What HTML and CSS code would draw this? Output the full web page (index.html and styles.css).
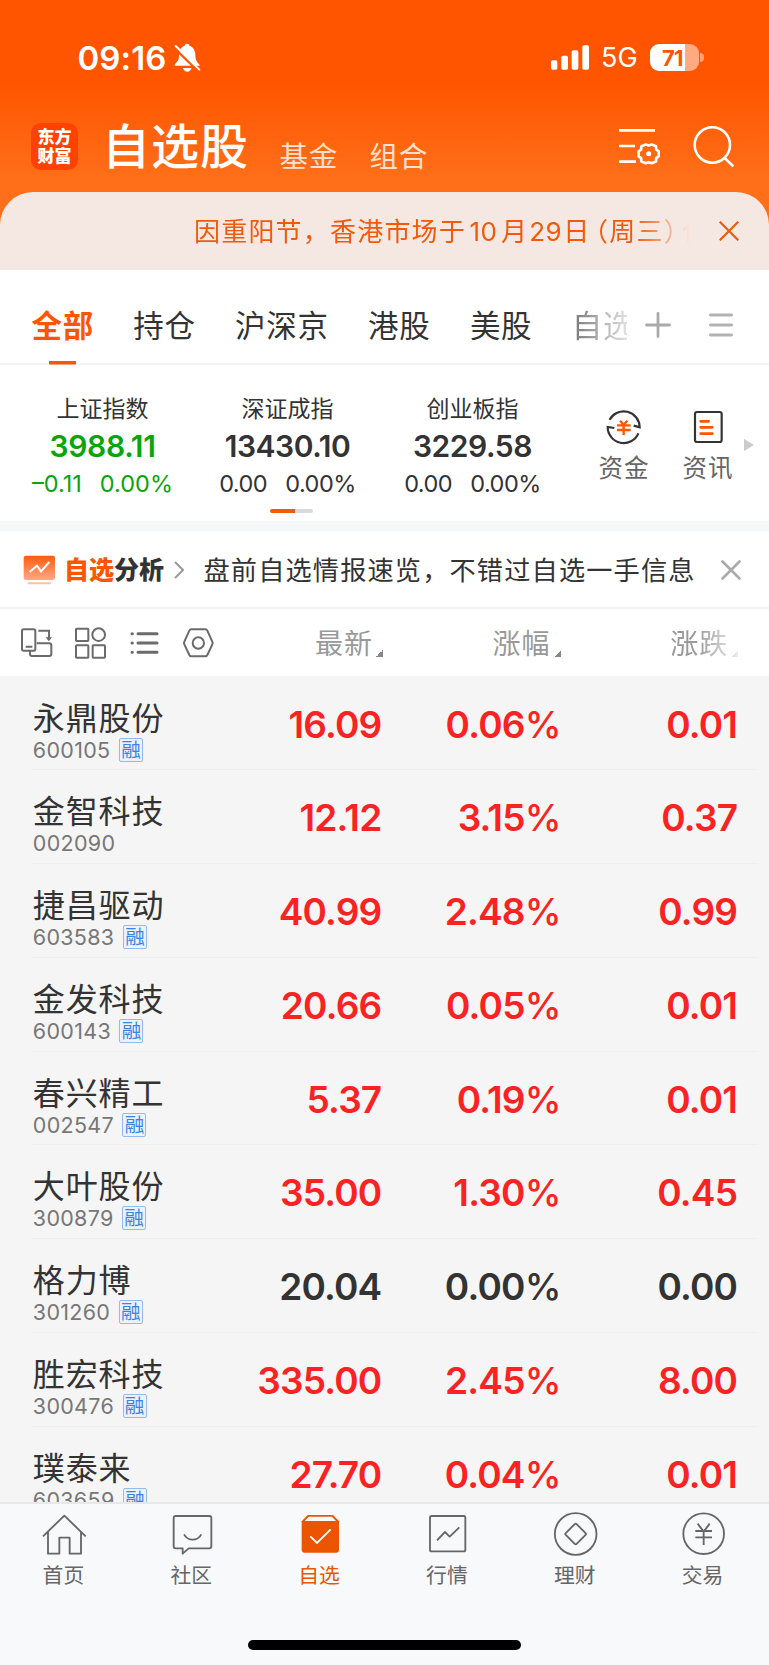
FILE: index.html
```html
<!DOCTYPE html>
<html lang="zh-CN">
<head>
<meta charset="utf-8">
<title>自选股</title>
<link rel="stylesheet" href="styles.css">
</head>
<body>
<div class="app">
  <header class="top">
    <div class="status">
      <span class="time">09:16</span>
      <svg class="bell" viewBox="516 63 90 99"><path fill="#fff" d="M524 137q0-4 3-7c9-8 10-15 10-25 0-16 7-25 17-28 0-4 3-6 7-6s7 2 7 6c11 3 18 13 18 28 0 12 3 19 10 26q3 3 3 6zM548 144h27q-4 11-13 11t-14-11z"/><path stroke="#ff5500" stroke-width="7" d="M524 85l76 74"/><path stroke="#fff" stroke-width="6" stroke-linecap="round" d="M527 78l71 71"/></svg>
      <svg class="signal" viewBox="498 74 114 75" fill="#fff"><rect x="498" y="120" width="19" height="28" rx="5"/><rect x="529" y="106" width="20" height="42" rx="5"/><rect x="560" y="90" width="20" height="58" rx="5"/><rect x="592" y="75" width="20" height="73" rx="5"/></svg>
      <span class="net">5G</span>
      <span class="battery"><span class="level">71</span></span>
      <span class="nub"></span>
    </div>
    <div class="titlebar">
      <div class="logo">东方<br>财富</div>
      <h1 class="title">自选股</h1>
      <span class="sub">基金</span>
      <span class="sub">组合</span>
      <svg class="filter" viewBox="699 320 132 120" fill="none" stroke="#fff" stroke-width="8"><path d="M702 333h108M702 380h48M702 427h51"/><polygon transform="translate(791 403.500)" stroke-linejoin="round" points="30,-7.500 30,7.500 22.500,13 22,23.100 9,28 0,25 -9,28 -22,23.100 -22.500,13 -30,7.500 -30,-7.500 -22.500,-13 -22,-23.100 -9,-28 0,-25 9,-28 22,-23.100 22.500,-13"/><circle cx="791" cy="403.500" r="7.500" fill="#fff" stroke="none"/></svg>
      <svg class="search" viewBox="921 314 132 132" fill="none" stroke="#fff" stroke-width="7.500"><circle cx="982" cy="374" r="53"/><path d="M1019 413l26 25"/></svg>
    </div>
    <div class="notice">
      <div class="notice-text">因重阳节，香港市场于<span class="num">10</span>月<span class="num">29</span>日<span class="po">（</span>周三<span class="pc">）</span>休市</div>
      <svg class="close" viewBox="0 0 20 20"><path stroke="#f05a0a" stroke-width="2.200" d="M.700.700l18.600 18.600M19.300.700L.700 19.300"/></svg>
    </div>
  </header>

  <nav class="groups">
    <div class="group-list">
      <span class="group on">全部</span><span class="group">持仓</span><span class="group">沪深京</span><span class="group">港股</span><span class="group">美股</span><span class="group">自选</span>
    </div>
    <svg class="plus" viewBox="0 0 26 26"><path stroke="#aaa" stroke-width="2.800" stroke-linecap="round" d="M1.500 13h23M13 1.500v23"/></svg>
    <svg class="menu" viewBox="0 0 24 26"><path stroke="#b2b2b2" stroke-width="2.800" stroke-linecap="round" d="M1.400 3h21.200M1.400 13h21.200M1.400 23h21.200"/></svg>
  </nav>

  <section class="indices">
    <div class="index down"><div class="iname">上证指数</div><div class="iprice">3988.11</div><div class="ichg"><span>–0.11</span><span>0.00%</span></div></div>
    <div class="index"><div class="iname">深证成指</div><div class="iprice">13430.10</div><div class="ichg"><span>0.00</span><span>0.00%</span></div><div class="pager"></div></div>
    <div class="index"><div class="iname">创业板指</div><div class="iprice">3229.58</div><div class="ichg"><span>0.00</span><span>0.00%</span></div></div>
    <div class="tool tool-fund">
      <svg viewBox="664 117 108 108" fill="none" stroke="#333" stroke-width="6.500"><path d="M674.600 149.500A48 48 0 0 1 765 172l-18-5M761.200 190A48 48 0 0 1 669 171l20 3"/><path stroke="#ff5500" stroke-width="7" d="M706 152l11 12 11-12M697 166h41M697 180h41M717 164v31"/></svg>
      <span>资金</span>
    </div>
    <div class="tool">
      <svg viewBox="915 117 108 108" fill="none" stroke="#333" stroke-width="6.500"><rect x="930" y="126" width="80" height="90" rx="6"/><path stroke="#ff5500" stroke-width="8" stroke-linecap="round" d="M947 154h24M947 172h35M947 191h35"/></svg>
      <span>资讯</span>
    </div>
    <svg class="more" viewBox="0 0 10 12"><path fill="#ccc" d="M0 0l10 6-10 6z"/></svg>
  </section>

  <section class="analysis">
    <svg class="chart-badge" viewBox="69 76 96 90"><defs><linearGradient id="g" x1="0" y1="0" x2="0" y2="1"><stop offset="0" stop-color="#ff5a0c"/><stop offset="1" stop-color="#ffa987"/></linearGradient></defs><rect x="71" y="78" width="94" height="73" rx="7" fill="url(#g)"/><path fill="none" stroke="#fff" stroke-width="6" d="M89 127l22-19 12 17 25-28"/><path stroke="#ffc0a6" stroke-width="6" stroke-linecap="round" d="M86 161h64"/></svg>
    <span class="brand"><b>自选</b>分析</span>
    <svg class="chev" viewBox="0 0 10 18"><path fill="none" stroke="#999" stroke-width="2" d="M1 1l8 8-8 8"/></svg>
    <span class="brief">盘前自选情报速览，不错过自选一手信息</span>
    <svg class="close" viewBox="0 0 20 20"><path stroke="#aaa" stroke-width="2.600" stroke-linecap="round" d="M1.500 1.500l17 17M18.500 1.500l-17 17"/></svg>
  </section>

  <div class="cols">
    <svg class="views" viewBox="60 288 585 102" fill="none" stroke="#6b6b6b" stroke-width="6">
      <rect x="66" y="298" width="40" height="64" rx="5"/><path d="M77 350h20M115 302h32v28M110 340h38q6 0 6 6v26q0 6-6 6H96q-6 0-6-6v-9"/><path fill="#6b6b6b" stroke="none" d="M137 322h19l-9.500 12z"/>
      <rect x="228" y="296" width="37" height="37" rx="2"/><circle cx="296" cy="314" r="19"/><rect x="228" y="346" width="37" height="37" rx="2"/><rect x="278" y="346" width="37" height="37" rx="2"/>
      <path stroke-width="9" stroke-linecap="round" d="M414 311h57M414 339h57M414 367h57M396 311h1M396 339h1M396 367h1"/>
      <path stroke-linejoin="round" d="M574 298h42q4 0 6 4l15 33q2 4 0 8l-15 32q-2 4-6 4h-42q-4 0-6-4l-15-32q-2-4 0-8l15-33q2-4 6-4z"/><circle cx="595" cy="339" r="17"/>
    </svg>
    <span class="col c1">最新<i></i></span>
    <span class="col c2">涨幅<i></i></span>
    <span class="col c3">涨跌<i></i></span>
  </div>

  <main class="stocks">
    <div class="row"><div class="who"><div class="name">永鼎股份</div><div class="code">600105<em>融</em></div></div><span class="v v1">16.09</span><span class="v v2">0.06<s>%</s></span><span class="v v3">0.01</span></div>
    <div class="row"><div class="who"><div class="name">金智科技</div><div class="code">002090</div></div><span class="v v1">12.12</span><span class="v v2">3.15<s>%</s></span><span class="v v3">0.37</span></div>
    <div class="row"><div class="who"><div class="name">捷昌驱动</div><div class="code">603583<em>融</em></div></div><span class="v v1">40.99</span><span class="v v2">2.48<s>%</s></span><span class="v v3">0.99</span></div>
    <div class="row"><div class="who"><div class="name">金发科技</div><div class="code">600143<em>融</em></div></div><span class="v v1">20.66</span><span class="v v2">0.05<s>%</s></span><span class="v v3">0.01</span></div>
    <div class="row"><div class="who"><div class="name">春兴精工</div><div class="code">002547<em>融</em></div></div><span class="v v1">5.37</span><span class="v v2">0.19<s>%</s></span><span class="v v3">0.01</span></div>
    <div class="row"><div class="who"><div class="name">大叶股份</div><div class="code">300879<em>融</em></div></div><span class="v v1">35.00</span><span class="v v2">1.30<s>%</s></span><span class="v v3">0.45</span></div>
    <div class="row flat"><div class="who"><div class="name">格力博</div><div class="code">301260<em>融</em></div></div><span class="v v1">20.04</span><span class="v v2">0.00<s>%</s></span><span class="v v3">0.00</span></div>
    <div class="row"><div class="who"><div class="name">胜宏科技</div><div class="code">300476<em>融</em></div></div><span class="v v1">335.00</span><span class="v v2">2.45<s>%</s></span><span class="v v3">8.00</span></div>
    <div class="row"><div class="who"><div class="name">璞泰来</div><div class="code">603659<em>融</em></div></div><span class="v v1">27.70</span><span class="v v2">0.04<s>%</s></span><span class="v v3">0.01</span></div>
  </main>

  <footer class="tabbar">
    <div class="tabs">
      <div class="tab"><svg viewBox="120 210 144 144"><path d="M129 289l64-62 64 62M144 276v65h34v-48h31v48h34v-65"/></svg><span>首页</span></div>
      <div class="tab"><svg viewBox="503 210 144 144"><path d="M526 228h101q6 0 6 6v85q0 6-6 6h-62l-18 16v-16h-21q-6 0-6-6v-85q0-6 6-6zM551 283q9 16 26 16t26-16"/></svg><span>社区</span></div>
      <div class="tab on"><svg viewBox="887 210 144 144"><path class="solid" d="M922 225h76l18 19v85q0 9-9 9h-94q-9 0-9-9v-85z"/><path class="lid" d="M925 230h70l12 13h-94z"/><path class="tick" d="M930 289l20 20 41-41"/></svg><span>自选</span></div>
      <div class="tab"><svg viewBox="115 210 144 144"><rect x="136" y="228" width="106" height="106" rx="5"/><path d="M157 301l24-25 14 14 29-28"/></svg><span>行情</span></div>
      <div class="tab"><svg viewBox="499 210 144 144"><circle cx="573" cy="282" r="62.500"/><rect x="550" y="259" width="46" height="46" rx="4" transform="rotate(45 573 282)"/></svg><span>理财</span></div>
      <div class="tab"><svg viewBox="882 210 144 144"><circle cx="956" cy="281" r="61"/><path d="M938 251l18 24 18-24M931 273h50M931 292h50M956 273v42"/></svg><span>交易</span></div>
    </div>
    <div class="home-bar"></div>
  </footer>
</div>
</body>
</html>
```
FILE: styles.css
```css
* { box-sizing: border-box; }
body { margin: 0; font-family: Inter, "Noto Sans CJK SC", sans-serif; color: #333; background: #fff; }
svg { display: block; flex: none; }
.app { width: 769px; height: 1665px; overflow: hidden; display: flex; flex-direction: column; }
.app > * { flex: none; }

.top { height: 270px; background: linear-gradient(#ff5500 84px, #ff6f19 180px); color: #fff; }
.status { height: 115px; display: flex; align-items: center; padding-left: 77.5px; }
.time { width: 94.5px; font-size: 33px; font-weight: 600; line-height: 40px; letter-spacing: .1px; white-space: nowrap; }
.bell { width: 30px; height: 33px; }
.signal { width: 38px; height: 25px; margin-left: 349px; }
.net { width: 60px; padding-left: 12px; font-size: 27px; line-height: 32px; white-space: nowrap; }
.battery { width: 49px; height: 27px; margin-left: 1px; border-radius: 9px; background: linear-gradient(90deg, #fff 34.5px, #ffaa80 34.5px); display: flex; align-items: center; }
.level { padding-left: 12px; width: 35px; color: #ff5500; font-size: 22px; font-weight: 700; line-height: 26px; letter-spacing: -.8px; white-space: nowrap; }
.nub { width: 4px; height: 9px; margin-left: 1px; border-radius: 0 4px 4px 0; background: #ffa175; }
.titlebar { height: 77px; padding: 0 0 15px 31px; display: flex; align-items: center; }
.logo { width: 47px; height: 47px; border-radius: 10px; background: #ff4200; font-size: 17px; font-weight: 900; line-height: 19.5px; text-align: center; padding-top: 5px; }
.title { margin: 2px 0 0 24px; width: 176px; font-size: 48px; font-weight: 500; line-height: 60px; letter-spacing: 1px; }
.sub { width: 90px; margin-top: 21px; padding-left: 1.5px; font-size: 28.5px; line-height: 36px; letter-spacing: .8px; color: #ffe0cf; }
.filter { width: 44px; height: 40px; margin-left: 160px; }
.search { width: 44px; height: 44px; margin-left: 30px; margin-top: 1px; }
.notice { height: 78px; border-radius: 33px 33px 0 0; background: #f5e8e3; padding-left: 194px; display: flex; align-items: center; }
.notice-text { width: 495px; margin-top: 1px; overflow: hidden; white-space: nowrap; font-size: 26px; letter-spacing: 1.2px; line-height: 40px; color: #f05a0a; -webkit-mask-image: linear-gradient(90deg, #000 440px, transparent 496px); mask-image: linear-gradient(90deg, #000 440px, transparent 496px); }
.num { display: inline-block; width: 35px; text-align: center; letter-spacing: .5px; }
.po, .pc { font-feature-settings: "halt"; }
.po { padding-left: 4.6px; }
.pc { padding-right: 4.6px; }
.close { width: 20px; height: 20px; margin-left: 30px; }

.groups { height: 95px; border-bottom: 2px solid #f5f5f5; padding-left: 31.5px; display: flex; }
.group-list { width: 595.5px; height: 95px; overflow: hidden; display: flex; gap: 39.4px; white-space: nowrap; font-size: 30.5px; letter-spacing: .7px; line-height: 40px; }
.group { flex: none; padding-top: 36px; height: 95px; }
.group.on { color: #ff5500; font-weight: 700; background: linear-gradient(#ff5500, #ff5500) 17.5px 90.5px / 27px 3.5px no-repeat; }
.group:last-child { background: linear-gradient(90deg, #777, #eee); background-clip: text; -webkit-background-clip: text; color: transparent; }
.plus { width: 26px; height: 26px; margin: 42px 0 0 18px; }
.menu { width: 24px; height: 26px; margin: 42px 0 0 38px; }

.indices { height: 156px; padding-left: 10px; display: flex; }
.index { width: 185px; padding-top: 28px; text-align: center; }
.iname { font-size: 23px; line-height: 32px; }
.iprice { font-size: 30px; font-weight: 600; line-height: 40px; margin-top: 1px; letter-spacing: -.45px; }
.ichg { display: flex; justify-content: center; gap: 18px; font-size: 23.5px; line-height: 30px; margin-top: 3px; letter-spacing: -.5px; }
.down .iprice, .down .ichg { color: #0aa50a; letter-spacing: 0; }
.down .iprice { letter-spacing: -.3px; }
.pager { width: 43px; height: 4px; margin: 10px 0 0 75px; border-radius: 2px; background: linear-gradient(90deg, #f05a0a 25px, #d8dade 25px); }
.tool { width: 84px; padding-top: 44px; display: flex; flex-direction: column; align-items: center; font-size: 24.5px; letter-spacing: 1px; line-height: 30px; color: #666; }
.tool-fund { margin-left: 17px; }
.tool svg { width: 36px; height: 36px; margin-bottom: 8px; }
.more { width: 10px; height: 12px; margin: 74px 0 0 -6px; }

.analysis { height: 88px; border-top: 10px solid #f5f7f9; border-bottom: 2px solid #f2f2f2; padding-left: 23px; display: flex; align-items: center; white-space: nowrap; }
.chart-badge { width: 32px; height: 30px; margin-top: 1px; }
.brand { width: 118.5px; margin-top: 2px; padding-left: 9px; font-size: 25px; font-weight: 900; line-height: 34px; }
.brand b { font-weight: 900; color: #ff5500; }
.chev { width: 10px; height: 18px; margin-top: 1px; }
.brief { margin: 4px 0 0 20px; width: 490.5px; font-size: 26.2px; letter-spacing: 1.15px; line-height: 40px; }
.analysis .close { margin: 2px 0 0 27px; }

.cols { height: 67px; padding-left: 20px; display: flex; align-items: center; font-size: 28px; letter-spacing: 1px; line-height: 40px; color: #999; }
.views { width: 195px; height: 34px; margin-top: 1px; }
.col { display: flex; align-items: flex-end; width: 177.6px; margin-top: 2px; }
.c1 { margin-left: 100px; }
.c3 { -webkit-mask-image: linear-gradient(90deg, #000 28px, rgba(0,0,0,.15) 68px); mask-image: linear-gradient(90deg, #000 28px, rgba(0,0,0,.15) 68px); width: 80px; }
.col i { width: 7px; height: 7px; margin: 0 0 7px 3px; background: linear-gradient(135deg, transparent 50%, #86868c 50%); }

.stocks { height: 826px; overflow: hidden; background: #f5f5f5; padding-top: .5px; }
.row { height: 93.8px; margin: 0 11px 0 32px; border-bottom: 1px solid #efefef; display: flex; color: #fa2222; }
.who { width: 165px; padding: 21px 0 0 .8px; color: #333; }
.name { font-size: 32px; letter-spacing: .9px; line-height: 42px; white-space: nowrap; }
.code { display: flex; align-items: center; gap: 8.5px; font-size: 21.5px; letter-spacing: .3px; line-height: 24px; margin-top: -2px; color: #777; }
.code em { width: 24px; height: 24px; border: 1.5px solid #8fbaf2; border-radius: 2px; background: #ebf2fa; color: #3a84e0; font-size: 19.5px; font-style: normal; line-height: 22px; letter-spacing: 0; text-align: center; }
.v { font-size: 37px; font-weight: 600; line-height: 50px; padding-top: 23px; text-align: right; white-space: nowrap; letter-spacing: -.8px; }
.v s { text-decoration: none; font-weight: 500; }
.v1 { width: 184.4px; }
.v2 { width: 179.2px; }
.v3 { width: 176.6px; }
.flat .v { color: #333; }

.tabbar { height: 163px; background: #f8f9fb; border-top: 2px solid #e8e8ea; }
.tabs { display: flex; padding: 6px 2px 0 0; }
.tab { flex: 1; display: flex; flex-direction: column; align-items: center; font-size: 20.8px; line-height: 30px; color: #666; }
.tab svg { width: 48px; height: 48px; margin-bottom: 3px; fill: none; stroke: #666; stroke-width: 5.5; stroke-linejoin: round; }
.tab span { margin-left: -1px; }
.tab.on { color: #eb5500; }
.tab .solid { fill: #eb5500; stroke: none; }
.tab .lid { fill: #f8f9fb; stroke: none; }
.tab .tick { stroke: #fff; stroke-linejoin: miter; }
.home-bar { width: 273px; height: 10px; margin: 48.5px auto 0; border-radius: 5px; background: #000; }
```
